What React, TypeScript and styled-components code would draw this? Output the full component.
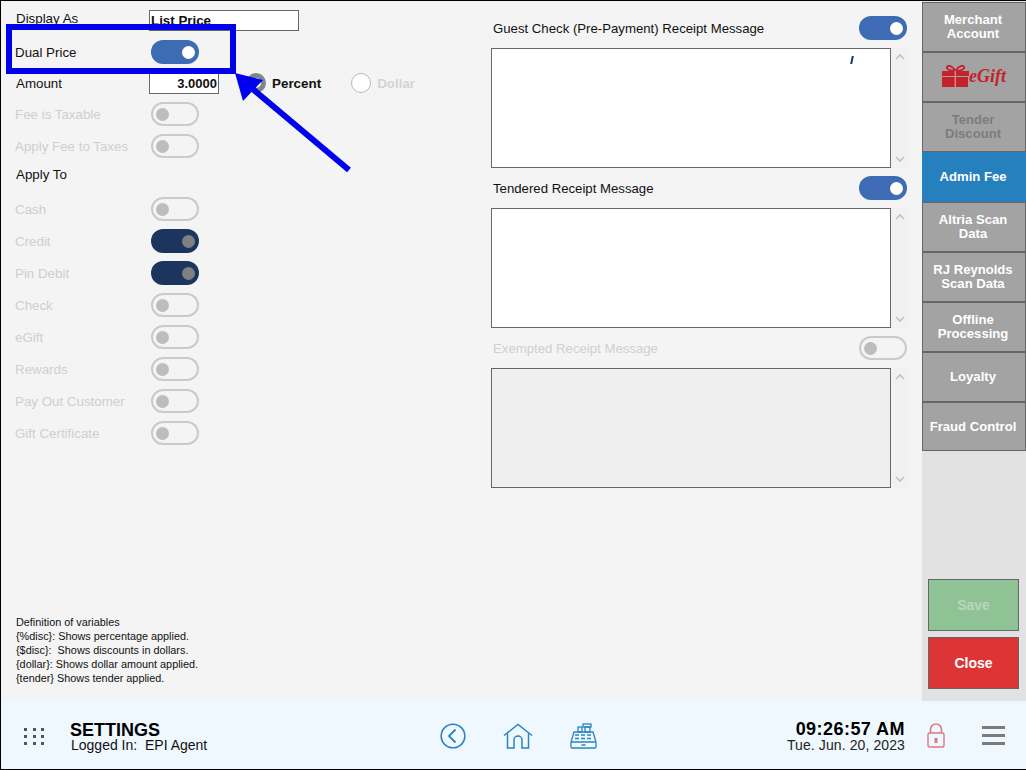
import React from "react";
import styled, { createGlobalStyle } from "styled-components";

const Global = createGlobalStyle`
  html, body { margin: 0; padding: 0; background: #fff; }
  * { box-sizing: border-box; }
  body { font-family: "Liberation Sans", Arial, sans-serif; }
`;

const Page = styled.div`
  position: relative;
  width: 1026px;
  height: 770px;
  overflow: hidden;
  display: flex;
  flex-direction: column;
  border-top: 1px solid #000;
  border-left: 1px solid #000;
  border-bottom: 1px solid #000;
  background: #f4f4f4;
  color: #111;
`;

const Main = styled.div`
  display: flex;
  height: 700px;
`;

const LeftColumn = styled.section`
  width: 490px;
  padding: 5px 0 16px 15px;
  display: flex;
  flex-direction: column;
`;

const RightColumn = styled.section`
  width: 431px;
  padding-top: 7px;
  display: flex;
  flex-direction: column;
`;

const Row = styled.div<{ $gap: number }>`
  display: flex;
  align-items: center;
  height: 24px;
  margin-top: ${(p) => p.$gap}px;
  font-size: 13.33px;
  flex: none;
`;

const Label = styled.span<{ $off?: boolean; $tight?: boolean }>`
  width: ${(p) => (p.$off || p.$tight ? 134 : 133)}px;
  margin-left: ${(p) => (p.$off || p.$tight ? -1 : 0)}px;
  flex: none;
  font-size: 13.33px;
  color: ${(p) => (p.$off ? "#cfcfcf" : "#111")};
`;

const TextField = styled.div<{ $w: number; $right?: boolean; $top?: number }>`
  width: ${(p) => p.$w}px;
  height: 21px;
  flex: none;
  align-self: flex-start;
  margin-top: ${(p) => p.$top ?? 2}px;
  padding: 0 1px;
  background: #fff;
  border: 1px solid #666;
  font-size: ${(p) => (p.$right ? 13 : 13.33)}px;
  font-weight: 700;
  line-height: 20px;
  overflow: hidden;
  color: #111;
  text-align: ${(p) => (p.$right ? "right" : "left")};
`;

const Track = styled.div<{ $mode: "on" | "off" | "dark" }>`
  width: 48px;
  height: 24px;
  flex: none;
  margin-left: 2px;
  border-radius: 12px;
  display: flex;
  align-items: center;
  justify-content: ${(p) => (p.$mode === "off" ? "flex-start" : "flex-end")};
  padding: 0 ${(p) => (p.$mode === "off" ? 3 : 4)}px;
  background: ${(p) => (p.$mode === "on" ? "#3d6cb4" : p.$mode === "dark" ? "#1c355e" : "transparent")};
  border: ${(p) => (p.$mode === "off" ? "2px solid #cacaca" : "none")};
  &::after {
    content: "";
    width: 13px;
    height: 13px;
    border-radius: 50%;
    background: ${(p) => (p.$mode === "on" ? "#fff" : p.$mode === "dark" ? "#808080" : "#bdbdbd")};
  }
`;

const RadioGroup = styled.div<{ $space: number }>`
  display: flex;
  align-items: center;
  gap: 6px;
  margin-left: ${(p) => p.$space}px;
`;

const RadioMark = styled.span<{ $on?: boolean }>`
  width: 20px;
  height: 20px;
  border-radius: 50%;
  background: #fff;
  border: ${(p) => (p.$on ? "5px solid #7c868c" : "1px solid #a9bccb")};
`;

const RadioText = styled.span<{ $off?: boolean }>`
  font-weight: 700;
  font-size: 13.4px;
  color: ${(p) => (p.$off ? "#d4d4d4" : "#111")};
`;

const Notes = styled.div`
  margin-top: auto;
  font-size: 10.85px;
  line-height: 14px;
  color: #111;
`;

const NoteLine = styled.div`
  white-space: pre;
`;

const MessageBlock = styled.div`
  height: 160px;
  flex: none;
`;

const MessageHead = styled.div`
  height: 40px;
  width: 416px;
  padding-left: 2px;
  display: flex;
  align-items: center;
  justify-content: space-between;
`;

const MessageTitle = styled.span<{ $off?: boolean }>`
  font-size: 13.2px;
  color: ${(p) => (p.$off ? "#d0d0d0" : "#111")};
`;

const MessageBody = styled.div`
  display: flex;
  height: 120px;
  gap: 1px;
`;

const MessageBox = styled.div<{ $off?: boolean }>`
  position: relative;
  width: 400px;
  height: 120px;
  border: 1px solid #666;
  background: ${(p) => (p.$off ? "#efefef" : "#fff")};
`;

const Caret = styled.span`
  position: absolute;
  left: 359px;
  top: 7px;
  width: 2px;
  height: 8px;
  background: #1c355e;
  transform: skewX(-12deg);
`;

const ScrollRail = styled.div`
  width: 16px;
  height: 120px;
  background: #f1f1f1;
  display: flex;
  flex-direction: column;
  justify-content: space-between;
  align-items: center;
  padding: 5px 0;
`;

const Side = styled.aside`
  width: 104px;
  background: #e2e2e2;
  display: flex;
  flex-direction: column;
`;

const NavList = styled.div`
  padding-top: 1px;
  display: flex;
  flex-direction: column;
  > :last-child { height: 49px; }
`;

const NavButton = styled.div<{ $active?: boolean; $dim?: boolean }>`
  width: 104px;
  flex: none;
  height: 50px;
  display: flex;
  align-items: center;
  justify-content: center;
  text-align: center;
  padding-right: 2px;
  font-size: 13.1px;
  font-weight: 700;
  line-height: 14px;
  color: ${(p) => (p.$dim ? "#7d7d7d" : "#fff")};
  background: ${(p) => (p.$active ? "#2680bd" : "#a3a3a3")};
  border: 1px solid ${(p) => (p.$active ? "#2680bd" : "#666")};
`;

const Gift = styled.div`
  display: flex;
  align-items: center;
  margin: 0 -2px 2px 0;
  color: #c4232b;
`;

const GiftWord = styled.span`
  font-family: "Liberation Serif", serif;
  font-style: italic;
  font-weight: 700;
  font-size: 18px;
  line-height: 20px;
  color: #c4232b;
`;

const ActionStack = styled.div`
  margin-top: auto;
  padding: 0 0 12px 6px;
  display: flex;
  flex-direction: column;
  gap: 6px;
`;

const ActionButton = styled.div<{ $tone: "save" | "close" }>`
  width: 91px;
  height: 52px;
  display: flex;
  align-items: center;
  justify-content: center;
  font-size: 14px;
  font-weight: 700;
  border: 1px solid #666;
  background: ${(p) => (p.$tone === "save" ? "#8fc395" : "#dd3535")};
  color: ${(p) => (p.$tone === "save" ? "#b9d6bc" : "#fff")};
`;

const Footer = styled.footer`
  height: 68px;
  flex: none;
  background: #f0f8ff;
  display: flex;
  align-items: center;
  padding-left: 23px;
`;

const Dots = styled.div`
  width: 20px;
  display: grid;
  grid-template-columns: repeat(3, 3px);
  justify-content: space-between;
  row-gap: 4px;
  margin-top: 2px;
  span { height: 3px; background: #555; }
`;

const TitleBlock = styled.div`
  margin-left: 26px;
  width: 370px;
  flex: none;
  margin-top: 4px;
`;

const Title = styled.div`
  font-size: 18px;
  font-weight: 700;
  line-height: 16px;
  color: #000;
`;

const SubTitle = styled.div`
  font-size: 14px;
  line-height: 15px;
  margin-left: 1px;
  color: #111;
  white-space: pre;
`;

const NavIcons = styled.div`
  display: flex;
  align-items: center;
  margin-top: 1px;
`;

const Clock = styled.div`
  margin-left: auto;
  text-align: right;
  margin-top: 4px;
`;

const Time = styled.div`
  font-size: 18px;
  font-weight: 700;
  line-height: 17px;
  letter-spacing: 0.45px;
  color: #000;
  white-space: pre;
`;

const DateText = styled.div`
  font-size: 14px;
  line-height: 15px;
  letter-spacing: 0.1px;
  color: #222;
`;

const RightIcons = styled.div`
  display: flex;
  align-items: center;
  margin-left: 22px;
  margin-right: 21px;
  gap: 37px;
  margin-top: 1px;
`;

const Bars = styled.div`
  width: 23px;
  display: flex;
  flex-direction: column;
  gap: 5px;
  span { height: 3px; background: #7b7b7b; }
`;

const Annotation = styled.svg`
  position: absolute;
  left: -1px;
  top: -1px;
  pointer-events: none;
`;

const Chevron = ({ up }: { up?: boolean }) => (
  <svg width="10" height="7" viewBox="0 0 10 7" fill="none" stroke="#c4c4c4" strokeWidth="1.6">
    <path d={up ? "M1 6 L5 2 L9 6" : "M1 1 L5 5 L9 1"} />
  </svg>
);

const applyRows: { label: string; gap: number; mode: "off" | "dark" }[] = [
  { label: "Cash", gap: 11, mode: "off" },
  { label: "Credit", gap: 8, mode: "dark" },
  { label: "Pin Debit", gap: 8, mode: "dark" },
  { label: "Check", gap: 8, mode: "off" },
  { label: "eGift", gap: 8, mode: "off" },
  { label: "Rewards", gap: 8, mode: "off" },
  { label: "Pay Out Customer", gap: 8, mode: "off" },
  { label: "Gift Certificate", gap: 8, mode: "off" },
];

const notes = [
  "Definition of variables",
  "{%disc}: Shows percentage applied.",
  "{$disc}:  Shows discounts in dollars.",
  "{dollar}: Shows dollar amount applied.",
  "{tender} Shows tender applied.",
];

const messages = [
  { title: "Guest Check (Pre-Payment) Receipt Message", mode: "on" as const, off: false, caret: true },
  { title: "Tendered Receipt Message", mode: "on" as const, off: false, caret: false },
  { title: "Exempted Receipt Message", mode: "off" as const, off: true, caret: false },
];

const navItems = [
  { text: ["Merchant", "Account"] },
  { gift: true, text: [] as string[] },
  { text: ["Tender", "Discount"], dim: true },
  { text: ["Admin Fee"], active: true },
  { text: ["Altria Scan", "Data"] },
  { text: ["RJ Reynolds", "Scan Data"] },
  { text: ["Offline", "Processing"] },
  { text: ["Loyalty"] },
  { text: ["Fraud Control"] },
];

const GiftIcon = () => (
  <svg width="27" height="22" viewBox="0 0 27 22" fill="#c4232b">
    <path d="M13.5 6 C10 0.5 6 0 5 2 C4 4 8 6 13.5 6 C19 6 23 4 22 2 C21 0 17 0.5 13.5 6 Z" fill="none" stroke="#c4232b" strokeWidth="1.8" />
    <rect x="0" y="6" width="27" height="5" />
    <rect x="0" y="12" width="26" height="10" />
    <rect x="12.6" y="6" width="1.4" height="16" fill="#d98a8e" />
  </svg>
);

export default function App() {
  return (
    <Page>
      <Global />
      <Main>
        <LeftColumn>
          <Row $gap={0}>
            <Label>Display As</Label>
            <TextField $w={150} $top={4}>List Price</TextField>
          </Row>
          <Row $gap={10}>
            <Label $tight>Dual Price</Label>
            <Track $mode="on" />
          </Row>
          <Row $gap={7}>
            <Label>Amount</Label>
            <TextField $w={70} $right>3.0000</TextField>
            <RadioGroup $space={27}>
              <RadioMark $on />
              <RadioText>Percent</RadioText>
            </RadioGroup>
            <RadioGroup $space={30}>
              <RadioMark />
              <RadioText $off>Dollar</RadioText>
            </RadioGroup>
          </Row>
          <Row $gap={7}>
            <Label $off>Fee is Taxable</Label>
            <Track $mode="off" />
          </Row>
          <Row $gap={8}>
            <Label $off>Apply Fee to Taxes</Label>
            <Track $mode="off" />
          </Row>
          <Row $gap={4}>
            <Label>Apply To</Label>
          </Row>
          {applyRows.map((r) => (
            <Row key={r.label} $gap={r.gap}>
              <Label $off>{r.label}</Label>
              <Track $mode={r.mode} />
            </Row>
          ))}
          <Notes>
            {notes.map((n) => (
              <NoteLine key={n}>{n}</NoteLine>
            ))}
          </Notes>
        </LeftColumn>
        <RightColumn>
          {messages.map((m) => (
            <MessageBlock key={m.title}>
              <MessageHead>
                <MessageTitle $off={m.off}>{m.title}</MessageTitle>
                <Track $mode={m.mode} />
              </MessageHead>
              <MessageBody>
                <MessageBox $off={m.off}>{m.caret && <Caret />}</MessageBox>
                <ScrollRail>
                  <Chevron up />
                  <Chevron />
                </ScrollRail>
              </MessageBody>
            </MessageBlock>
          ))}
        </RightColumn>
        <Side>
          <NavList>
            {navItems.map((n, i) => (
              <NavButton key={i} $active={n.active} $dim={n.dim}>
                {n.gift ? (
                  <Gift>
                    <GiftIcon />
                    <GiftWord>eGift</GiftWord>
                  </Gift>
                ) : (
                  <div>
                    {n.text.map((t) => (
                      <div key={t}>{t}</div>
                    ))}
                  </div>
                )}
              </NavButton>
            ))}
          </NavList>
          <ActionStack>
            <ActionButton $tone="save">Save</ActionButton>
            <ActionButton $tone="close">Close</ActionButton>
          </ActionStack>
        </Side>
      </Main>
      <Footer>
        <Dots>
          {Array.from({ length: 9 }).map((_, i) => (
            <span key={i} />
          ))}
        </Dots>
        <TitleBlock>
          <Title>SETTINGS</Title>
          <SubTitle>{"Logged In:  EPI Agent"}</SubTitle>
        </TitleBlock>
        <NavIcons>
          <svg width="26" height="26" viewBox="0 0 26 26" fill="none" stroke="#2a82c0" strokeWidth="1.6">
            <circle cx="13" cy="13" r="11.8" />
            <path d="M15.5 6.5 L9 13 L15.5 19.5" strokeWidth="1.8" />
          </svg>
          <svg style={{ marginLeft: 37 }} width="30" height="26" viewBox="0 0 30 26" fill="none" stroke="#2a82c0" strokeWidth="1.5">
            <path d="M1 12.5 L15 1.5 L29 12.5" />
            <path d="M4.5 10.5 V25 H11 V17 A4 4 0 0 1 19 17 V25 H25.5 V10.5" />
          </svg>
          <svg style={{ marginLeft: 37 }} width="27" height="26" viewBox="0 0 27 26" fill="none" stroke="#2a82c0" strokeWidth="1.3">
            <path d="M1 19 L4 9 H23 L26 19" />
            <rect x="1" y="19" width="25" height="6" rx="1" />
            <rect x="8" y="4" width="4" height="5" />
            <rect x="13" y="1" width="8" height="3" />
            <rect x="15" y="4" width="5" height="5" />
            <path d="M5 12 H9 M11 12 H15 M17 12 H21 M5 15.5 H9 M11 15.5 H15 M17 15.5 H21 M11.5 22 H15.5" strokeWidth="1.5" />
          </svg>
        </NavIcons>
        <Clock>
          <Time>09:26:57 AM</Time>
          <DateText>Tue. Jun. 20, 2023</DateText>
        </Clock>
        <RightIcons>
          <svg width="18" height="25" viewBox="0 0 18 25" fill="none" stroke="#dc7a7d" strokeWidth="1.4">
            <rect x="1" y="10" width="16" height="14" rx="1.5" />
            <path d="M3.5 10 V6.5 A5.5 5.5 0 0 1 14.5 6.5 V10" strokeWidth="1.6" />
            <path d="M9 15 V20" strokeWidth="3" />
          </svg>
          <Bars>
            <span />
            <span />
            <span />
          </Bars>
        </RightIcons>
      </Footer>
      <Annotation width="1026" height="770" viewBox="0 0 1026 770" fill="none">
        <rect x="9" y="27" width="224" height="44" stroke="#0000ee" strokeWidth="6" />
        <path d="M349 170 L248 85" stroke="#0000ee" strokeWidth="6" />
        <path d="M235 73 L263 80 L243 101 Z" fill="#0000ee" />
      </Annotation>
    </Page>
  );
}
